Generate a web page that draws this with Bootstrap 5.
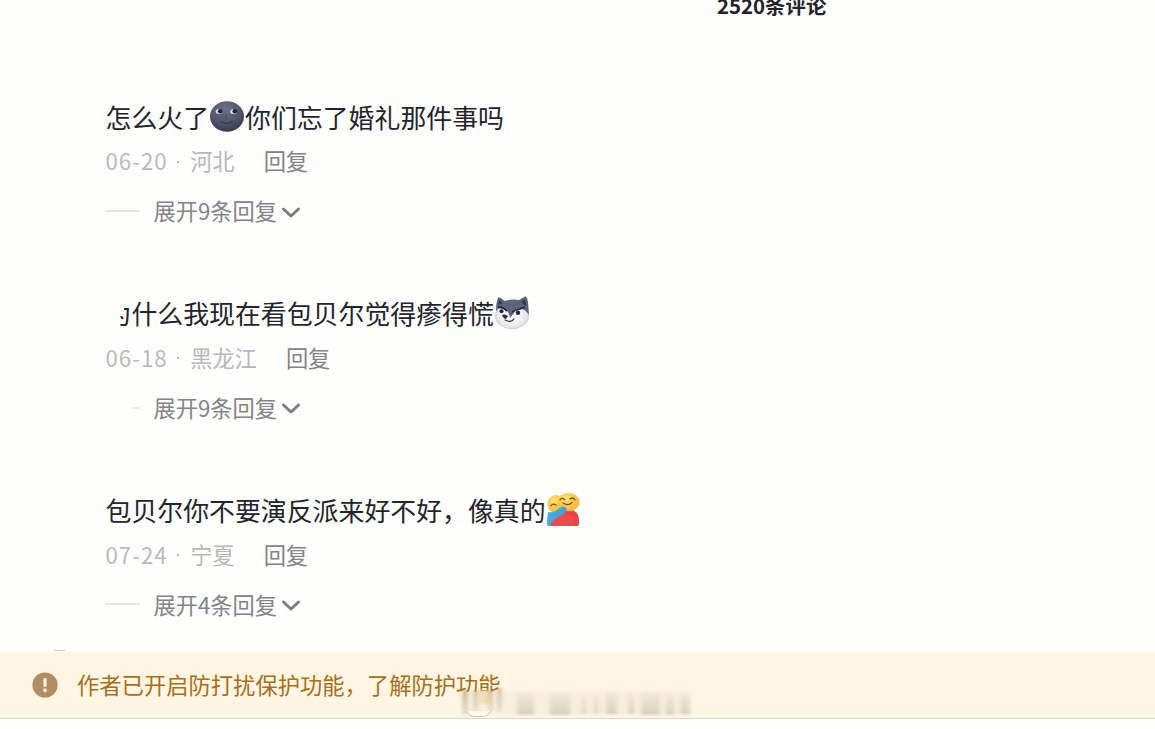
<!DOCTYPE html>
<html lang="zh-CN">
<head>
  <meta charset="UTF-8" />
  <meta name="viewport" content="width=device-width, initial-scale=1">
  <title>评论</title>
  <link href="https://cdn.jsdelivr.net/npm/bootstrap@5.3.3/dist/css/bootstrap.min.css" rel="stylesheet">
  <style>
    body {
      height: 729px;
      background-color: #fefefd;
      font-family: "Noto Sans CJK SC", sans-serif;
      font-size: 22.25px;
      color: #838388;
    }
    .total {
      height: 30px;
      line-height: 30px;
      margin-top: -10px;
      padding-left: 717px;
      font-size: 20.4px;
      color: #202129;
    }
    .comments {
      height: 632px;
      padding: 75px 0 0 105.5px;
    }
    .comment { height: 196.6px; }
    .comment-text {
      height: 44px;
      font-size: 25.9px;
      color: #22232b;
    }
    .comment-text svg { width: 36px; height: 36px; }
    .comment-meta { height: 44px; }
    .comment-meta .date { color: #bbbbbd; letter-spacing: 1px; }
    .comment-meta .dot { width: 2px; height: 2px; margin: 1px 11px 0 9.5px; background-color: #b2b2b4; }
    .comment-meta .place { color: #b8b8ba; margin-right: 29px; }
    .expand { height: 56px; }
    .expand .dash { width: 35px; height: 2px; margin-left: -1px; margin-right: 14px; background-color: #e5e5e6; }
    .expand .dash-faded { background: linear-gradient(to right, transparent 28px, #e9e9ea 28px); }
    .expand svg { width: 22px; height: 18px; margin-left: 2px; margin-top: 1px; }
    .half-hidden { clip-path: polygon(14px 22px, 17px 22px, 19px 13px, 26px 13px, 26px 40px, 13px 40px); }
    .stub { width: 11px; height: 1px; margin-top: 18px; margin-left: -52px; background-color: #cfcfcf; }
    .notice {
      height: 67px;
      background-color: #fff5e3;
      border-bottom: 1px solid #ded9cf;
      padding-left: 32px;
      font-size: 22.3px;
      color: #a86f18;
    }
    .notice .warn { width: 26px; height: 26px; margin-right: 19px; }
    .smear { left: 455px; top: 26px; width: 245px; height: 43px; }
  </style>
</head>
<body class="overflow-hidden">

<div class="total fw-bold">2520条评论</div>

<div class="comments">
  <div class="comment">
    <div class="comment-text d-flex align-items-center">
      <span>怎么火了</span>
      <svg viewBox="0 0 36 36">
        <defs>
          <radialGradient id="moon" cx=".45" cy=".25" r=".8">
            <stop offset="0" stop-color="#6d7189" />
            <stop offset=".6" stop-color="#50536a" />
            <stop offset="1" stop-color="#34374a" />
          </radialGradient>
        </defs>
        <ellipse cx="18" cy="17.5" rx="17" ry="15.3" fill="url(#moon)" />
        <ellipse cx="10" cy="12.5" rx="3.4" ry="2.5" fill="#d9dce4" />
        <ellipse cx="24.5" cy="12.5" rx="3.4" ry="2.5" fill="#d9dce4" />
        <circle cx="11.2" cy="12.3" r="2.3" fill="#222535" />
        <circle cx="25.8" cy="12.3" r="2.3" fill="#222535" />
        <path d="M17 15 Q16 19 17.5 20 H20" fill="none" stroke="#484b62" stroke-width="1.1" />
        <path d="M12 22.5 Q18 26.5 24 22" fill="none" stroke="#363a50" stroke-width="1.2" stroke-linecap="round" />
      </svg>
      <span>你们忘了婚礼那件事吗</span>
    </div>
    <div class="comment-meta d-flex align-items-center">
      <span class="date">06-20</span><span class="dot"></span><span class="place">河北</span><span>回复</span>
    </div>
    <div class="expand d-flex align-items-center">
      <span class="dash"></span><span>展开9条回复</span>
      <svg viewBox="0 0 22 18"><path d="M4.5 6 L12 13 L19.5 6" fill="none" stroke="#7c7c81" stroke-width="3" stroke-linecap="round" stroke-linejoin="round" /></svg>
    </div>
  </div>

  <div class="comment">
    <div class="comment-text d-flex align-items-center">
      <span class="half-hidden">为</span><span>什么我现在看包贝尔觉得瘆得慌</span>
      <svg viewBox="0 0 36 36">
        <defs>
          <radialGradient id="fur" cx=".5" cy=".5" r=".6">
            <stop offset="0" stop-color="#ffffff" />
            <stop offset=".7" stop-color="#e8e8ed" />
            <stop offset="1" stop-color="#a9aab6" />
          </radialGradient>
        </defs>
        <ellipse cx="18" cy="20" rx="17" ry="13.2" fill="url(#fur)" />
        <path d="M2 15 Q2 6 4 2 Q5 0 8 3 L11 5 Q18 2.5 25 4 L31 .5 Q33 0 34 6 L35 19 Q32 14 28 13 Q23 13 20 17 L16 22 Q15 14 9 12.5 Q4 11 2 15Z" fill="#5e637d" />
        <path d="M4 9 L5 4 L9 7Z M27 6 L31 3 L32 10Z" fill="#343950" />
        <path d="M4 11 Q9 11 13 15 M18 16 Q24 13.5 31 11" fill="none" stroke="#252a3f" stroke-width="1.8" />
        <ellipse cx="7.5" cy="15.5" rx="3.3" ry="2.3" fill="#f6f6f8" />
        <circle cx="7.5" cy="15.3" r="2" fill="#222638" />
        <ellipse cx="24.5" cy="17" rx="4.4" ry="2.5" fill="#f6f6f8" />
        <circle cx="24" cy="16.8" r="2.2" fill="#222638" />
        <path d="M8 19 Q11 17.5 14 20 L12 23 Q9 22.5 8 19Z" fill="#292c3b" />
        <path d="M11 24 Q17 27 20 23" fill="none" stroke="#292c3b" stroke-width="1.2" stroke-linecap="round" />
      </svg>
    </div>
    <div class="comment-meta d-flex align-items-center">
      <span class="date">06-18</span><span class="dot"></span><span class="place">黑龙江</span><span>回复</span>
    </div>
    <div class="expand d-flex align-items-center">
      <span class="dash dash-faded"></span><span>展开9条回复</span>
      <svg viewBox="0 0 22 18"><path d="M4.5 6 L12 13 L19.5 6" fill="none" stroke="#7c7c81" stroke-width="3" stroke-linecap="round" stroke-linejoin="round" /></svg>
    </div>
  </div>

  <div class="comment">
    <div class="comment-text d-flex align-items-center">
      <span>包贝尔你不要演反派来好不好，像真的</span>
      <svg viewBox="0 0 36 36">
        <defs>
          <linearGradient id="blueArm" x1="0" y1="0" x2="1" y2="1">
            <stop offset="0" stop-color="#4bb4e2" />
            <stop offset="1" stop-color="#3d8fd0" />
          </linearGradient>
          <radialGradient id="face" cx=".4" cy=".3" r=".7">
            <stop offset="0" stop-color="#ffe36e" />
            <stop offset="1" stop-color="#f3b43c" />
          </radialGradient>
        </defs>
        <path d="M12 22 L24 17 Q32 19 33 27 V32 Q33 34 31 34 H9Z" fill="#e94345" />
        <ellipse cx="9.5" cy="12" rx="8" ry="9" fill="url(#face)" />
        <ellipse cx="22.5" cy="10" rx="11" ry="9.2" fill="url(#face)" />
        <path d="M14 8 Q16 5 18.5 7.5 M24 7 Q27 4.5 29 8 M17 11 Q22 14.5 26 10.5 M5 13.5 Q7 11 10 13" fill="none" stroke="#80501d" stroke-width="1.4" stroke-linecap="round" />
        <path d="M2 20 Q8 21 12 17 Q17 13 20.5 16 Q21 20 15 25 L11 34 H3 Q1 34 1 31Z" fill="url(#blueArm)" />
        <path d="M3 34 Q9 25 19 22 L28 25 V34Z" fill="#ed4a4d" />
        <path d="M2 24 L11 25 Q5 29 4 34 H3 Q1 34 1 31Z" fill="#45abde" />
      </svg>
    </div>
    <div class="comment-meta d-flex align-items-center">
      <span class="date">07-24</span><span class="dot"></span><span class="place">宁夏</span><span>回复</span>
    </div>
    <div class="expand d-flex align-items-center">
      <span class="dash"></span><span>展开4条回复</span>
      <svg viewBox="0 0 22 18"><path d="M4.5 6 L12 13 L19.5 6" fill="none" stroke="#7c7c81" stroke-width="3" stroke-linecap="round" stroke-linejoin="round" /></svg>
    </div>
    <div class="d-flex"><span class="stub"></span></div>
  </div>
</div>

<div class="notice position-relative d-flex align-items-center">
  <svg class="warn" viewBox="0 0 26 26">
    <circle cx="13" cy="13" r="12.6" fill="#b28c63" />
    <rect x="11.4" y="6" width="3.2" height="9" rx="1.4" fill="#fff5e3" />
    <circle cx="13" cy="18.3" r="1.9" fill="#fff5e3" />
  </svg>
  <span>作者已开启防打扰保护功能，了解防护功能</span>
  <!-- smudged strip over the end of the line -->
  <svg class="smear position-absolute" viewBox="0 0 245 43">
    <defs>
      <filter id="soft" x="-20%" y="-20%" width="140%" height="140%"><feGaussianBlur stdDeviation="2 1.2" /></filter>
      <linearGradient id="fade" x1="0" y1="0" x2="0" y2="1">
        <stop offset="0" stop-color="#aaa79c" stop-opacity=".05" />
        <stop offset="1" stop-color="#aaa79c" stop-opacity=".42" />
      </linearGradient>
      <linearGradient id="fadeDark" x1="0" y1="0" x2="0" y2="1">
        <stop offset="0" stop-color="#a8813f" stop-opacity=".75" />
        <stop offset="1" stop-color="#aaa79c" stop-opacity=".4" />
      </linearGradient>
    </defs>
    <rect x="7" y="14" width="40" height="22" fill="#fff5e3" />
    <g filter="url(#soft)">
      <rect x="6" y="14" width="230" height="23" fill="#efe8d9" opacity=".5" />
      <rect x="8" y="12" width="4" height="24" fill="url(#fadeDark)" />
      <rect x="19" y="12" width="3" height="22" fill="url(#fadeDark)" />
      <rect x="24" y="12" width="10" height="14" fill="#f4d9ab" opacity=".8" />
      <rect x="34" y="12" width="3" height="21" fill="url(#fadeDark)" />
      <rect x="43" y="10" width="3" height="24" fill="url(#fadeDark)" />
      <rect x="62" y="13" width="17" height="24" fill="url(#fade)" />
      <rect x="95" y="13" width="20" height="24" fill="url(#fade)" />
      <rect x="127" y="15" width="4" height="21" fill="url(#fade)" />
      <rect x="139" y="15" width="4" height="21" fill="url(#fade)" />
      <rect x="151" y="12" width="11" height="24" fill="url(#fade)" />
      <rect x="173" y="15" width="6" height="21" fill="url(#fade)" />
      <rect x="186" y="13" width="19" height="24" fill="url(#fade)" />
      <rect x="211" y="15" width="8" height="22" fill="url(#fade)" />
      <rect x="225" y="14" width="10" height="22" fill="url(#fade)" />
    </g>
    <path d="M12 33 Q14 38.5 20 38.5 H28 Q33 38.5 36 33" fill="#fffaf0" stroke="#c8c5bd" stroke-width="1" />
  </svg>
</div>

<script src="https://cdn.jsdelivr.net/npm/bootstrap@5.3.3/dist/js/bootstrap.bundle.min.js"></script>
</body>
</html>
